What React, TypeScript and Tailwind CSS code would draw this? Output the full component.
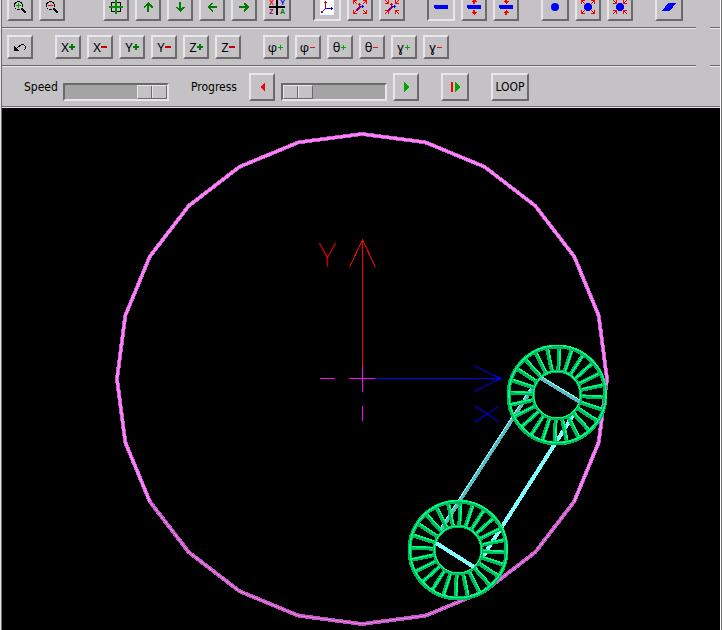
import type { ReactNode } from 'react'
import clsx from 'clsx'

const RAISED = 'border-2 border-t-[#e8e6e8] border-l-[#e8e6e8] border-r-[#6b6a6b] border-b-[#6b6a6b]'
const SUNKEN = 'border-2 border-t-[#6b6a6b] border-l-[#6b6a6b] border-r-[#e8e6e8] border-b-[#e8e6e8]'

const GREEN = '#007c00'
const BRIGHT_GREEN = '#00a800'
const RED = '#ff0000'
const DARK_RED = '#c80000'
const BLUE = '#0000ff'
const PURPLE = '#900060'

type ToolButtonProps = {
  label: string
  children: ReactNode
  size?: string
  pressed?: boolean
}

function ToolButton({ label, children, size = 'w-[26px] h-7', pressed }: ToolButtonProps) {
  return (
    <button
      type="button"
      aria-label={label}
      aria-pressed={pressed}
      className={clsx('flex shrink-0 items-center justify-center bg-[#c4c2c4]', size, pressed ? SUNKEN : RAISED)}
    >
      {children}
    </button>
  )
}

function Icon({ children, crisp = true }: { children: ReactNode; crisp?: boolean }) {
  return (
    <svg viewBox="0 0 16 16" className="size-4 shrink-0" fill="none" shapeRendering={crisp ? 'crispEdges' : 'auto'} aria-hidden="true">
      {children}
    </svg>
  )
}

function Group({ children, className }: { children: ReactNode; className?: string }) {
  return <div className={clsx('flex gap-1.5', className)}>{children}</div>
}

function Separator({ full }: { full?: boolean }) {
  const line = 'h-0.5 border-t border-t-[#6b6a6b] border-b border-b-[#e8e6e8]'
  return (
    <div className="flex gap-3.5">
      <div className={clsx('flex-1', line)} />
      {!full && <div className={clsx('w-2.5', line)} />}
    </div>
  )
}

function Magnifier({ plus }: { plus?: boolean }) {
  return (
    <Icon>
      <circle cx="6.5" cy="6.5" r="4" stroke="#000" />
      <path d="M9.5 9.5 L14 14" stroke="#000" strokeWidth="2" />
      <path d="M4 6.5 H9" stroke={plus ? BRIGHT_GREEN : RED} />
      {plus && <path d="M6.5 4 V9" stroke={BRIGHT_GREEN} />}
    </Icon>
  )
}

function Arrow({ angle }: { angle: number }) {
  return (
    <Icon>
      <g transform={`rotate(${angle} 8 8)`} fill={GREEN}>
        <path d="M7 5 H9 V13 H7 Z" />
        <path d="M8 3 L12.5 7.5 V8.5 H11 L8 6 L5 8.5 H3.5 V7.5 Z" />
      </g>
    </Icon>
  )
}

// four red corner arrows, pointing away from or towards the middle
function CornerArrows({ inward }: { inward?: boolean }) {
  return (
    <g stroke={RED}>
      {[0, 90, 180, 270].map((angle) => (
        <path
          key={angle}
          transform={`rotate(${angle} 8 8)`}
          d={inward ? 'M1 1 L4.5 4.5 M1 4.5 H4.5 V1' : 'M1.5 1.5 L5 5 M1.5 5 V1.5 H5'}
        />
      ))}
    </g>
  )
}

function MiniAxes() {
  return (
    <>
      <path d="M7.5 8 V4 M6 5.5 H9" stroke={DARK_RED} />
      <path d="M7 7.5 H12 M10.5 6 V9" stroke={BLUE} />
      <path d="M8 8 L4 12" stroke={PURPLE} strokeWidth="2" />
    </>
  )
}

function AxesIcon() {
  return (
    <span className="flex h-7 w-3.5 shrink-0 items-center justify-center bg-white [clip-path:inset(0_0_6px)]">
      <svg viewBox="0 0 14 16" className="h-4 w-3.5" fill="none" shapeRendering="crispEdges" aria-hidden="true">
        <path d="M5.5 10 V2 M4 3.5 H7" stroke={DARK_RED} />
        <path d="M5 9.5 H13 M11.5 8 V11" stroke={BLUE} />
        <path d="M5 10 L2 13" stroke={PURPLE} />
        <path d="M1 12 H3 V14 H1 Z" fill={PURPLE} />
      </svg>
    </span>
  )
}

function BarIcon({ arrows }: { arrows?: 'in' | 'out' }) {
  return (
    <Icon>
      <path d="M1 6 H14 L15 7 V10 H2 L1 9 Z" fill={BLUE} />
      {arrows === 'out' && <path d="M8 0 L11 3 H9 V5 H7 V3 H5 Z M8 16 L11 13 H9 V11 H7 V13 H5 Z" fill={RED} />}
      {arrows === 'in' && <path d="M8 5 L11 2 H9 V0 H7 V2 H5 Z M8 11 L11 14 H9 V16 H7 V14 H5 Z" fill={RED} />}
    </Icon>
  )
}

function AxisQuad() {
  return (
    <span className="grid h-4 w-5 shrink-0 grid-cols-[9px_9px] grid-rows-[7px_7px] place-content-center gap-0.5 bg-[linear-gradient(#000,#000),linear-gradient(#000,#000)] bg-[length:2px_16px,16px_2px] bg-center bg-no-repeat text-center font-['Liberation_Sans',sans-serif] text-[7px] leading-[7px] font-bold">
      <span className="text-[#ff0000]">X</span>
      <span className="text-[#0000ff]">Y</span>
      <span className="text-[#900060]">Z</span>
      <span className="text-[#007c00]">A</span>
    </span>
  )
}

function Sign({ plus, thin }: { plus: boolean; thin?: boolean }) {
  const color = plus ? (thin ? BRIGHT_GREEN : GREEN) : thin ? '#e81010' : DARK_RED
  if (thin) {
    return (
      <svg viewBox="0 0 7 7" className="size-[7px] shrink-0" shapeRendering="crispEdges" aria-hidden="true">
        <path d={plus ? 'M1 3.5 H6 M3.5 1 V6' : 'M1 3.5 H6'} stroke={color} />
      </svg>
    )
  }
  return (
    <svg viewBox="0 0 6 6" className="size-1.5 shrink-0" shapeRendering="crispEdges" aria-hidden="true">
      <path d={plus ? 'M0 3 H6 M3 0 V6' : 'M0 3 H6'} stroke={color} strokeWidth="2" />
    </svg>
  )
}

const AXES = ['X', 'Y', 'Z']
const ANGLES = [
  { symbol: 'φ', name: 'phi' },
  { symbol: 'θ', name: 'theta' },
  { symbol: 'ɣ', name: 'gamma' },
]

function JogButtons({ symbol, name, thin }: { symbol: string; name: string; thin?: boolean }) {
  return (
    <>
      {[true, false].map((plus) => (
        <ToolButton key={String(plus)} label={`${name} ${plus ? 'plus' : 'minus'}`} size="w-[26px] h-6">
          <span
            className={clsx(
              'text-[13px] leading-none',
              thin ? "font-['Open_Sans',sans-serif]" : "font-['Noto_Sans',sans-serif]",
            )}
          >
            {symbol}
          </span>
          <Sign plus={plus} thin={thin} />
        </ToolButton>
      ))}
    </>
  )
}

function Slider({ id, value }: { id: string; value: number }) {
  return (
    <input
      id={id}
      type="range"
      defaultValue={value}
      className={clsx(
        'h-4.5 w-[106px] shrink-0 appearance-none bg-[#a4a4a4]',
        SUNKEN,
        '[&::-webkit-slider-thumb]:h-3.5 [&::-webkit-slider-thumb]:w-[30px] [&::-webkit-slider-thumb]:appearance-none [&::-webkit-slider-thumb]:border',
        '[&::-webkit-slider-thumb]:border-t-[#e8e6e8] [&::-webkit-slider-thumb]:border-l-[#e8e6e8] [&::-webkit-slider-thumb]:border-r-[#6b6a6b] [&::-webkit-slider-thumb]:border-b-[#6b6a6b]',
        '[&::-webkit-slider-thumb]:bg-[linear-gradient(90deg,#c4c2c4_13px,#6b6a6b_13px,#6b6a6b_14px,#e8e6e8_14px,#e8e6e8_15px,#c4c2c4_15px)]',
      )}
    />
  )
}

function polar(cx: number, cy: number, r: number, deg: number) {
  const a = (deg * Math.PI) / 180
  return [cx + r * Math.cos(a), cy + r * Math.sin(a)]
}

// part of the 24-sided workpiece outline, in steps of 15 degrees
function outline(from: number, to: number) {
  return Array.from({ length: to - from + 1 }, (_, i) =>
    polar(362, 379, 245, (from + i) * 15).map((n) => n.toFixed(1)).join(','),
  ).join(' ')
}

function Wheel({ cx, cy }: { cx: number; cy: number }) {
  return (
    <g>
      {Array.from({ length: 24 }, (_, i) => {
        const [x1, y1] = polar(cx, cy, 24, i * 15 + 3)
        const [x2, y2] = polar(cx, cy, 48, i * 15 + 3)
        return (
          <g key={i}>
            <line x1={x1} y1={y1} x2={x2} y2={y2} stroke="#00b85c" strokeWidth="4" />
            <line x1={x1 + 1} y1={y1 - 1} x2={x2 + 1} y2={y2 - 1} stroke="#00ff80" strokeWidth="1.5" />
          </g>
        )
      })}
      <circle cx={cx} cy={cy} r="48.5" stroke="#00b85c" strokeWidth="4" />
      <circle cx={cx + 0.5} cy={cy - 1} r="48.5" stroke="#00ff80" strokeWidth="1.5" />
      <circle cx={cx} cy={cy} r="24" stroke="#00b85c" strokeWidth="3" />
      <circle cx={cx} cy={cy - 0.5} r="23.5" stroke="#00ff80" strokeWidth="1" />
    </g>
  )
}

function Viewport() {
  return (
    <svg viewBox="2 108 718 522" className="block h-auto w-full bg-black" fill="none" shapeRendering="crispEdges" role="img" aria-label="Workpiece and tool path">
      <polyline points={outline(0, 24)} stroke="#c05cc0" strokeWidth="4" strokeLinejoin="bevel" />
      <polyline points={outline(10, 26)} stroke="#ff80ff" strokeWidth="2.5" />
      <polyline points={outline(2, 10)} stroke="#f07cf0" strokeWidth="1" />

      <g stroke="#ff0000">
        <path d="M362.5 240 V366" />
        <path d="M349.5 267 L362.5 240 L375.5 267" />
      </g>
      <g stroke="#0000ff">
        <path d="M375 378.5 H501" />
        <path d="M474 365.5 L500.5 378.5 L474 391.5" />
      </g>
      <path d="M349 378.5 H375 M362.5 366 V392 M320 378.5 H335 M362.5 406 V421" stroke="#ff00ff" />
      <g className="font-['Noto_Sans',sans-serif] text-[34px] font-thin" textAnchor="middle">
        <text x="327" y="267" fill="#ff0000">Y</text>
        <text transform="translate(475 414) rotate(90)" fill="#0000ff">X</text>
      </g>

      <path d="M533 387 L440 531" stroke="#5cb8bc" strokeWidth="4" />
      <path d="M532 386 L439 530" stroke="#80ffff" strokeWidth="1" />
      <path d="M574 414 L482 558" stroke="#80ffff" strokeWidth="4" />
      <Wheel cx={557} cy={395} />
      <Wheel cx={458} cy={550} />
      <path d="M541 378 L580 402" stroke="#5cb8bc" strokeWidth="4" />
      <path d="M542 377 L580 400" stroke="#80ffff" strokeWidth="1" />
      <path d="M436 543 L474 567" stroke="#80ffff" strokeWidth="4" />
    </svg>
  )
}

export default function App() {
  return (
    <main className="min-h-screen border-r border-l border-r-[#6b6a6b] border-l-[#e8e6e8] bg-black font-['DejaVu_Sans_Condensed','DejaVu_Sans',sans-serif] text-[12px] text-black">
      <div className="min-h-screen border-r border-l border-r-white border-l-[#6b6a6b]">
        <header className="bg-[#c4c2c4]">
          {/* View tools, scrolled partly under the top edge */}
          <div className="mb-1.5 flex h-[21px] items-end gap-[22px] overflow-hidden pl-[5px]">
            <Group className="mr-4">
              <ToolButton label="Zoom in"><Magnifier plus /></ToolButton>
              <ToolButton label="Zoom out"><Magnifier /></ToolButton>
            </Group>
            <Group>
              <ToolButton label="Centre">
                <Icon>
                  <path d="M3.5 3.5 H12.5 V12.5 H3.5 Z" stroke="#000" />
                  <path d="M1 8 H15 M8 1 V15" stroke="#009000" strokeWidth="2" />
                </Icon>
              </ToolButton>
              <ToolButton label="Up"><Arrow angle={0} /></ToolButton>
              <ToolButton label="Down"><Arrow angle={180} /></ToolButton>
              <ToolButton label="Left"><Arrow angle={270} /></ToolButton>
              <ToolButton label="Right"><Arrow angle={90} /></ToolButton>
              <ToolButton label="Axes" size="w-7 h-7"><AxisQuad /></ToolButton>
            </Group>
            <Group>
              <ToolButton label="Show origin" size="w-7 h-7" pressed><AxesIcon /></ToolButton>
              <ToolButton label="Larger origin"><Icon><CornerArrows /><MiniAxes /></Icon></ToolButton>
              <ToolButton label="Smaller origin"><Icon><CornerArrows inward /><MiniAxes /></Icon></ToolButton>
            </Group>
            <Group>
              <ToolButton label="Lines" size="w-7 h-7" pressed><BarIcon /></ToolButton>
              <ToolButton label="Thicker lines"><BarIcon arrows="out" /></ToolButton>
              <ToolButton label="Thinner lines"><BarIcon arrows="in" /></ToolButton>
            </Group>
            <Group>
              <ToolButton label="Points" size="w-7 h-7"><Icon crisp={false}><circle cx="8" cy="8" r="4" fill={BLUE} /></Icon></ToolButton>
              <ToolButton label="Larger points"><Icon><CornerArrows /><circle cx="8" cy="8" r="4" fill={BLUE} /></Icon></ToolButton>
              <ToolButton label="Smaller points"><Icon><CornerArrows inward /><circle cx="8" cy="8" r="4" fill={BLUE} /></Icon></ToolButton>
            </Group>
            <ToolButton label="Faces" size="w-7 h-7">
              <Icon><path d="M1 12 L7 4 H15 L9 12 Z" fill={BLUE} /></Icon>
            </ToolButton>
          </div>
          <Separator />

          {/* Rotation and translation */}
          <div className="flex gap-[22px] py-1.5 pl-[5px]">
            <ToolButton label="Undo" size="w-[26px] h-6">
              <Icon>
                <path d="M2 7 V12 H7 Z" fill="#000" />
                <path d="M4 10 L8 6.5 L9.5 5.5 H11.5 L13.5 7.5 V9.5 L11.5 11.5" stroke="#000" />
              </Icon>
            </ToolButton>
            <Group>
              {AXES.map((axis) => <JogButtons key={axis} symbol={axis} name={axis} />)}
            </Group>
            <Group>
              {ANGLES.map((a) => <JogButtons key={a.name} symbol={a.symbol} name={a.name} thin />)}
            </Group>
          </div>
          <Separator />

          {/* Playback */}
          <div className="flex items-end gap-1.5 pt-1.5 pb-[5px] pl-[22px]">
            <label htmlFor="speed" className="w-[33px] self-center">Speed</label>
            <Slider id="speed" value={100} />
            <label htmlFor="progress" className="ml-4 w-[52px] self-center">Progress</label>
            <ToolButton label="Back">
              <Icon><path d="M6 8 L11 3 V13 Z" fill={RED} /></Icon>
            </ToolButton>
            <Slider id="progress" value={0} />
            <ToolButton label="Play">
              <Icon><path d="M11 8 L6 3 V13 Z" fill={BRIGHT_GREEN} /></Icon>
            </ToolButton>
            <div className="ml-4 flex gap-[22px]">
              <ToolButton label="Step" size="w-7 h-7">
                <Icon>
                  <path d="M4 3 H6 V13 H4 Z" fill={RED} />
                  <path d="M13 8 L8 3 V13 Z" fill={BRIGHT_GREEN} />
                </Icon>
              </ToolButton>
              <ToolButton label="Loop" size="w-[38px] h-7">LOOP</ToolButton>
            </div>
          </div>
          <Separator full />
        </header>
        <Viewport />
      </div>
    </main>
  )
}
